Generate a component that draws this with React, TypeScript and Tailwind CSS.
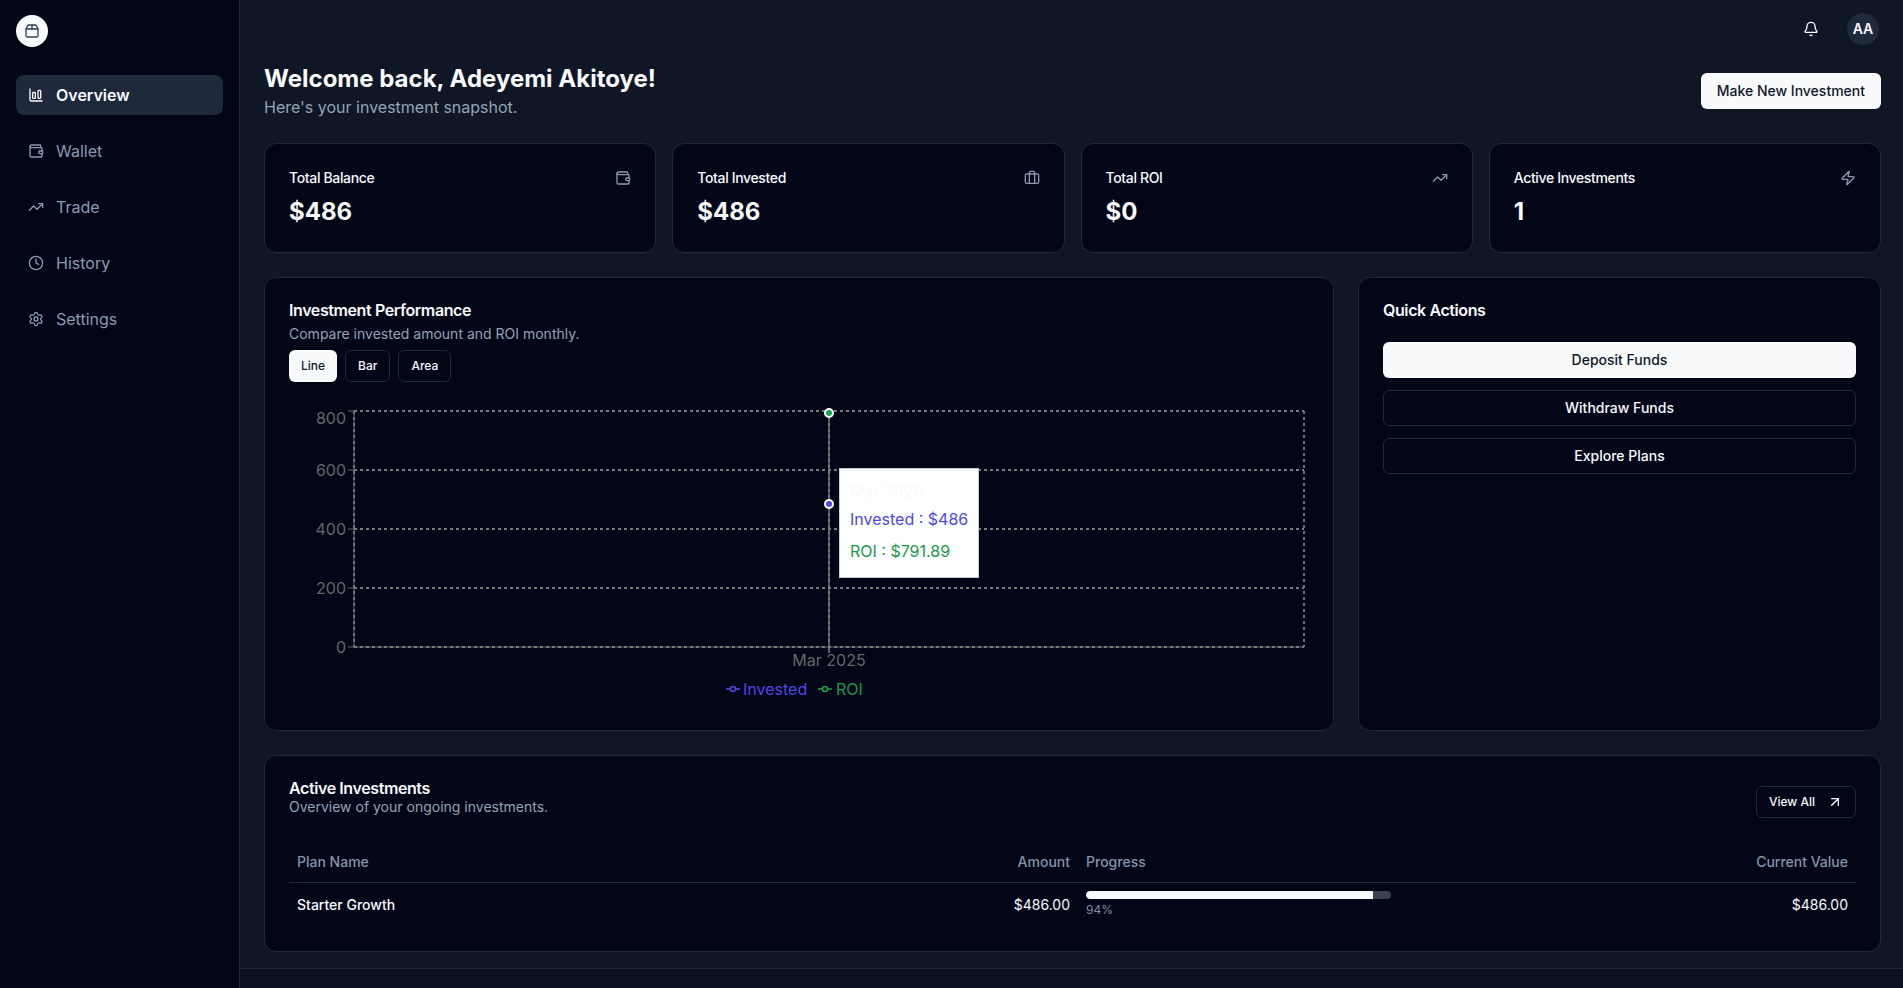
import { ArrowUpRight, Bell, Briefcase, ChartColumnBig, Clock, Package2, Settings, TrendingUp, Wallet, Zap } from 'lucide-react';

const font = { fontFamily: 'Inter, sans-serif' };

const navItems = [
  { label: 'Overview', icon: ChartColumnBig, active: true },
  { label: 'Wallet', icon: Wallet },
  { label: 'Trade', icon: TrendingUp },
  { label: 'History', icon: Clock },
  { label: 'Settings', icon: Settings },
];

const stats = [
  { label: 'Total Balance', value: '$486', icon: Wallet },
  { label: 'Total Invested', value: '$486', icon: Briefcase },
  { label: 'Total ROI', value: '$0', icon: TrendingUp },
  { label: 'Active Investments', value: '1', icon: Zap },
];

const Sidebar = () => (
  <aside className="w-60 shrink-0 h-full bg-[#020617] border-r border-[#1e293b] px-4 pt-[15px]">
    <div className="h-8 w-8 rounded-full bg-[#f8fafc] flex items-center justify-center text-[#334155]">
      <Package2 className="h-4 w-4" />
    </div>
    <nav className="mt-7 flex flex-col gap-4">
      {navItems.map((item) => (
        <a
          key={item.label}
          className={
            item.active
              ? 'h-10 flex items-center gap-3 px-3 rounded-lg bg-[#1e293b] text-[#f8fafc] font-semibold'
              : 'h-10 flex items-center gap-3 px-3 rounded-lg text-[#8a9ab2]'
          }
        >
          <item.icon className="h-4 w-4" />
          {item.label}
        </a>
      ))}
    </nav>
  </aside>
);

const PerformanceChart = () => (
  <div className="relative w-[1020px] h-[322px]">
    <svg width="1020" height="322" viewBox="0 0 1020 322" fontFamily="Inter, sans-serif" fontSize="16">
      {/* axes */}
      <g stroke="#666666">
        <path d="M65 29V265H1015" fill="none" />
        <path d="M59 29H65M59 88H65M59 147H65M59 206H65M59 265H65M540 265V271" />
      </g>
      {/* grid */}
      <g stroke="#7a7a7a" strokeWidth="1.8" strokeDasharray="3 3" fill="none">
        <path d="M65 29H1015M65 88H1015M65 147H1015M65 206H1015M65 265H1015" />
        <path d="M65 29V265M540 29V265M1015 29V265" />
      </g>
      <g fill="#666666" textAnchor="end">
        <text x="57" y="42">800</text>
        <text x="57" y="94">600</text>
        <text x="57" y="153">400</text>
        <text x="57" y="212">200</text>
        <text x="57" y="271">0</text>
      </g>
      <text x="540" y="284" fill="#666666" textAnchor="middle">Mar 2025</text>
      {/* hover cursor and dots */}
      <path d="M540 29V271" stroke="#7a7a7a" strokeWidth="1.4" />
      <circle cx="540" cy="31" r="4" fill="#16a34a" stroke="#ffffff" strokeWidth="2" />
      <circle cx="540" cy="122" r="4" fill="#4f46e5" stroke="#ffffff" strokeWidth="2" />
      {/* legend */}
      <g fill="none" strokeWidth="1.6">
        <path d="M437 307H451" stroke="#4f46e5" />
        <circle cx="444" cy="307" r="2.5" stroke="#4f46e5" fill="#020617" />
        <path d="M529 307H543" stroke="#16a34a" />
        <circle cx="536" cy="307" r="2.5" stroke="#16a34a" fill="#020617" />
      </g>
      <text x="454" y="313" fill="#4f46e5">Invested</text>
      <text x="547" y="313" fill="#179a4c">ROI</text>
    </svg>
    <div className="absolute left-[550px] top-[86px] w-[140px] h-[110px] bg-white border border-[#cccccc] p-[10px] whitespace-nowrap leading-6">
      <p className="text-[#f8fafc]">Mar 2025</p>
      <p className="text-[#4f46e5] pt-1">Invested : $486</p>
      <p className="text-[#179a4c] pt-2">ROI : $791.89</p>
    </div>
  </div>
);

export default function App() {
  return (
    <div className="h-screen w-full flex overflow-hidden bg-[#0f1626] text-[#f8fafc]" style={font}>
      <Sidebar />
      <div className="flex-1 min-w-0 h-full flex flex-col">
        <header className="h-[58px] shrink-0 flex items-center justify-end gap-7 pr-6">
          <Bell className="h-4 w-4 text-[#f8fafc]" />
          <div className="h-8 w-8 rounded-full bg-[#1e293b] flex items-center justify-center text-sm font-semibold">AA</div>
        </header>

        <main className="flex-1 pl-6 pr-[22px] pt-[5px]">
          <div className="flex items-center justify-between">
            <div>
              <h1 className="text-2xl font-bold leading-8">Welcome back, Adeyemi Akitoye!</h1>
              <p className="text-[#94a3b8]">Here's your investment snapshot.</p>
            </div>
            <button className="h-9 px-4 rounded-md bg-[#f8fafc] text-[#0f172a] text-sm font-medium">Make New Investment</button>
          </div>

          <div className="mt-6 grid grid-cols-4 gap-4">
            {stats.map((stat) => (
              <div key={stat.label} className="h-[110px] rounded-xl border border-[#1e293b] bg-[#020617] px-6 pt-6">
                <div className="flex items-center justify-between">
                  <span className="text-sm font-medium tracking-tight">{stat.label}</span>
                  <stat.icon className="h-4 w-4 text-[#8a98ad]" />
                </div>
                <div className="mt-2 text-2xl font-bold leading-8">{stat.value}</div>
              </div>
            ))}
          </div>

          <div className="mt-6 grid grid-cols-[1070px_1fr] gap-6">
            <section className="h-[454px] rounded-xl border border-[#1e293b] bg-[#020617] px-6 pt-6">
              <h2 className="font-semibold leading-4 tracking-tight">Investment Performance</h2>
              <p className="mt-[6px] text-sm text-[#94a3b8]">Compare invested amount and ROI monthly.</p>
              <div className="mt-[6px] flex gap-2">
                <button className="h-8 px-3 rounded-md bg-[#f8fafc] text-[#0f172a] text-xs font-medium">Line</button>
                <button className="h-8 px-3 rounded-md border border-[#1e293b] text-xs font-medium">Bar</button>
                <button className="h-8 px-3 rounded-md border border-[#1e293b] text-xs font-medium">Area</button>
              </div>
              <PerformanceChart />
            </section>

            <section className="rounded-xl border border-[#1e293b] bg-[#020617] px-6 pt-6">
              <h2 className="font-semibold leading-4 tracking-tight">Quick Actions</h2>
              <div className="mt-6 flex flex-col gap-3">
                <button className="h-9 rounded-md bg-[#f8fafc] text-[#0f172a] text-sm font-medium">Deposit Funds</button>
                <button className="h-9 rounded-md border border-[#1e293b] text-sm font-medium">Withdraw Funds</button>
                <button className="h-9 rounded-md border border-[#1e293b] text-sm font-medium">Explore Plans</button>
              </div>
            </section>
          </div>

          <section className="mt-6 h-[197px] rounded-xl border border-[#1e293b] bg-[#020617] px-6 pt-6">
            <div className="flex items-start justify-between">
              <div>
                <h2 className="font-semibold leading-4 tracking-tight">Active Investments</h2>
                <p className="text-sm text-[#94a3b8] mt-px">Overview of your ongoing investments.</p>
              </div>
              <button className="mt-[6px] h-8 w-[100px] rounded-md border border-[#1e293b] text-xs font-medium flex items-center justify-center gap-3">
                View All
                <ArrowUpRight className="h-4 w-4" />
              </button>
            </div>
            <table className="mt-6 w-full table-fixed text-sm">
              <thead>
                <tr className="h-10 border-b border-[#1e293b] text-[#8294ab]">
                  <th className="w-[689px] px-2 text-left font-medium">Plan Name</th>
                  <th className="w-[100px] px-2 text-right font-medium">Amount</th>
                  <th className="w-[400px] px-2 text-left font-medium">Progress</th>
                  <th className="px-2 text-right font-medium">Current Value</th>
                </tr>
              </thead>
              <tbody>
                <tr className="h-[46px]">
                  <td className="px-2 font-medium">Starter Growth</td>
                  <td className="px-2 text-right">$486.00</td>
                  <td className="px-2 pb-px">
                    <div className="w-[305px] h-2 rounded-full bg-[#374151] overflow-hidden">
                      <div className="h-full rounded-l-full bg-[#f8fafc]" style={{ width: '94%' }} />
                    </div>
                    <div className="text-xs text-[#7f8ea3] mt-[3px] leading-4">94%</div>
                  </td>
                  <td className="px-2 text-right">$486.00</td>
                </tr>
              </tbody>
            </table>
          </section>
        </main>

        <footer className="h-5 shrink-0 border-t border-[#1e293b] bg-[#0b1120]" />
      </div>
    </div>
  );
}
